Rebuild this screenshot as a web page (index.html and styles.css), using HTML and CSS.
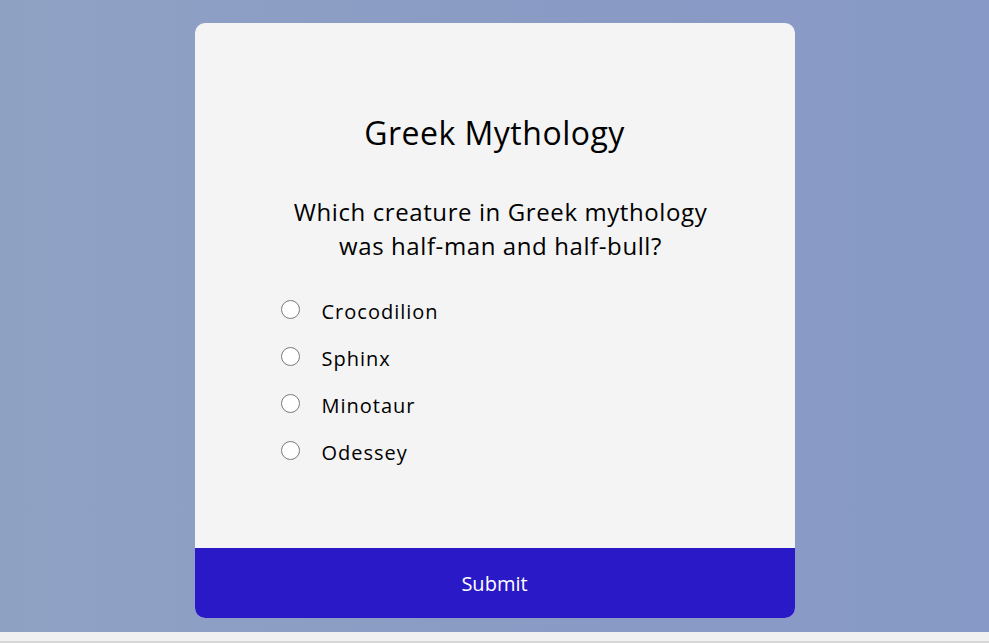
FILE: index.html
```html
<!DOCTYPE html>
<html lang="en">
<head>
<meta charset="utf-8">
<title>Quiz</title>
<link rel="stylesheet" href="styles.css">
</head>
<body>
<main class="page">
  <div class="quiz-card">
    <div class="quiz-body">
      <h1 class="quiz-title">Greek Mythology</h1>
      <h2 class="question">Which creature in Greek mythology was half-man and half-bull?</h2>
      <ul class="answers">
        <li><label class="answer"><input type="radio" name="answer" class="radio"><span>Crocodilion</span></label></li>
        <li><label class="answer"><input type="radio" name="answer" class="radio"><span>Sphinx</span></label></li>
        <li><label class="answer"><input type="radio" name="answer" class="radio"><span>Minotaur</span></label></li>
        <li><label class="answer"><input type="radio" name="answer" class="radio"><span>Odessey</span></label></li>
      </ul>
    </div>
    <button class="submit">Submit</button>
  </div>
</main>
<div class="scrollbar"><div class="thumb"></div></div>
</body>
</html>
```
FILE: styles.css
```css
* { box-sizing: border-box; }
html, body { margin: 0; padding: 0; }
body {
  font-family: "Open Sans", "Liberation Sans", sans-serif;
  color: #000;
  background: #f1f1f1;
  height: 643px;
  overflow: hidden;
}
.page {
  height: 632px;
  padding-top: 23px;
  background: linear-gradient(90deg, #8fa1c3 0%, #8a9cc4 50%, #8799c6 100%);
}
.quiz-card {
  width: 600px;
  height: 595px;
  margin: 0 auto;
  background: #f4f4f4;
  border-radius: 10px;
  overflow: hidden;
  display: flex;
  flex-direction: column;
}
.quiz-body {
  flex: 1;
  padding: 90px 86px 0;
}
.quiz-title {
  margin: 0;
  font-size: 32px;
  line-height: 40px;
  font-weight: 400;
  letter-spacing: 0.5px;
  text-align: center;
}
.question {
  margin: 42px auto 0;
  width: 440px;
  font-size: 24px;
  line-height: 34px;
  font-weight: 400;
  letter-spacing: 0.6px;
  text-align: center;
}
.answers {
  list-style: none;
  margin: 36px 0 0;
  padding: 0;
  display: flex;
  flex-direction: column;
  gap: 23px;
}
.answer {
  display: flex;
  align-items: center;
  height: 24px;
  font-size: 20px;
  letter-spacing: 1px;
  cursor: pointer;
}
.radio {
  appearance: none;
  -webkit-appearance: none;
  width: 19px;
  height: 19px;
  margin: -4px 22px 0 0;
  border: 1px solid #7a7a7a;
  border-radius: 50%;
  background: #fff;
}
.submit {
  height: 70px;
  border: 0;
  background: #2a19c7;
  color: #fff;
  font-family: inherit;
  font-size: 20px;
  cursor: pointer;
}
.scrollbar {
  height: 11px;
  position: relative;
}
.thumb {
  position: absolute;
  left: 0;
  right: 0;
  bottom: 0;
  height: 2px;
  background: #d6d6d6;
}
```
